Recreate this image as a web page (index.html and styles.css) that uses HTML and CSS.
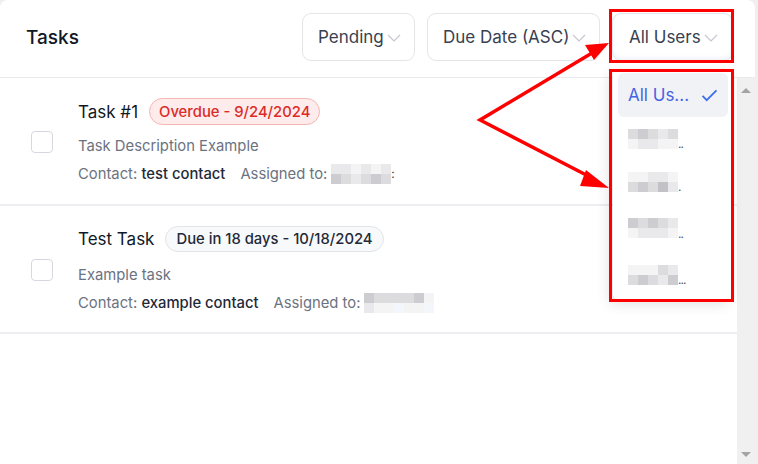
FILE: index.html
```html
<!DOCTYPE html>
<html>
<head>
<meta charset="utf-8">
<link rel="stylesheet" href="styles.css">
</head>
<body>
<div class="card">
  <header class="header">
    <h1 class="title">Tasks</h1>
    <div class="filters">
      <div class="select w-pending">Pending<svg class="chev" viewBox="0 0 14 8"><path d="M1 1l6 6 6-6"/></svg></div>
      <div class="select w-due">Due Date (ASC)<svg class="chev" viewBox="0 0 14 8"><path d="M1 1l6 6 6-6"/></svg></div>
      <div class="select-wrap">
        <div class="select active w-users">All Users<svg class="chev" viewBox="0 0 14 8"><path d="M1 1l6 6 6-6"/></svg></div>
        <div class="menu">
          <div class="menu-item selected"><span>All Us...</span><svg class="check" viewBox="0 0 18 14"><path d="M1.5 7.5l4.5 4.5L16.5 1.5"/></svg></div>
          <div class="menu-item"><span class="blur b5"><i class="g3"></i><i class="g4"></i><i class="g3"></i><i class="g2"></i><i class="g3"></i><i class="g1"></i><i class="g2"></i><i class="g2"></i><i class="g1"></i><i class="g1"></i></span><span class="dots">..</span></div>
          <div class="menu-item"><span class="blur b5"><i class="g1"></i><i class="g1"></i><i class="g2"></i><i class="g2"></i><i class="g1"></i><i class="g3"></i><i class="g4"></i><i class="g3"></i><i class="g5"></i><i class="g2"></i></span><span class="dots">.</span></div>
          <div class="menu-item tall"><span class="blur b5"><i class="g4"></i><i class="g3"></i><i class="g4"></i><i class="g3"></i><i class="g2"></i><i class="g1"></i><i class="g2"></i><i class="g2"></i><i class="g2"></i><i class="g1"></i></span><span class="dots">..</span></div>
          <div class="menu-item"><span class="blur b5"><i class="g1"></i><i class="g1"></i><i class="g1"></i><i class="g3"></i><i class="g2"></i><i class="g3"></i><i class="g4"></i><i class="g3"></i><i class="g2"></i><i class="g4"></i></span><span class="dots">...</span></div>
        </div>
      </div>
    </div>
  </header>
  <div class="body">
    <div class="list">
      <div class="task">
        <span class="checkbox"></span>
        <div class="info">
          <div class="head"><span class="name">Task #1</span><span class="badge overdue">Overdue - 9/24/2024</span></div>
          <div class="desc">Task Description Example</div>
          <div class="meta"><span>Contact: <b>test contact</b></span><span class="assigned">Assigned to: <span class="blur b6"><i class="g2"></i><i class="g2"></i><i class="g1"></i><i class="g2"></i><i class="g1"></i><i class="g2"></i><i class="g4"></i><i class="g3"></i><i class="g2"></i><i class="g3"></i><i class="g4"></i><i class="g3"></i></span><span class="colon">:</span></span></div>
        </div>
      </div>
      <div class="task">
        <span class="checkbox"></span>
        <div class="info">
          <div class="head"><span class="name">Test Task</span><span class="badge due">Due in 18 days - 10/18/2024</span></div>
          <div class="desc">Example task</div>
          <div class="meta"><span>Contact: <b>example contact</b></span><span class="assigned">Assigned to: <span class="blur b7"><i class="g4"></i><i class="g3"></i><i class="g3"></i><i class="g3"></i><i class="g3"></i><i class="g4"></i><i class="g1"></i><i class="g2"></i><i class="g1"></i><i class="g1"></i><i class="g0"></i><i class="g1"></i><i class="g1"></i><i class="g0"></i></span></span></div>
        </div>
      </div>
    </div>
    <div class="scrollbar"><span class="arrow up"></span><span class="arrow down"></span></div>
  </div>
</div>
<svg class="annot" width="758" height="464" viewBox="0 0 758 464">
  <rect x="610.5" y="10.5" width="122" height="51" fill="none" stroke="#ff0000" stroke-width="3"/>
  <rect x="610.5" y="70.5" width="122" height="230" fill="none" stroke="#ff0000" stroke-width="3"/>
  <polyline points="592,53 480,120 592,178" fill="none" stroke="#ff0000" stroke-width="3.5" stroke-linejoin="miter"/>
  <polygon points="609,43 585,45 594,60" fill="#ff0000"/>
  <polygon points="609,188 586,170 580,186" fill="#ff0000"/>
</svg>
</body>
</html>
```

FILE: styles.css
```css
* { box-sizing: border-box; }
html, body { margin: 0; padding: 0; }
body {
  width: 758px;
  height: 464px;
  overflow: hidden;
  background: #efefef;
  font-family: Inter, "Noto Sans", sans-serif;
  color: #111827;
  position: relative;
}
.card {
  width: 755px;
  height: 464px;
  background: #fff;
  border-radius: 8px 8px 0 0;
  display: flex;
  flex-direction: column;
}
.header {
  height: 78px;
  flex: none;
  display: flex;
  align-items: center;
  justify-content: space-between;
  padding: 0 22px 3px 26px;
  border-bottom: 1px solid #e9eaee;
}
.title {
  margin: 0;
  font-size: 19px;
  font-weight: 500;
  color: #111827;
}
.filters {
  display: flex;
  gap: 12px;
}
.select {
  height: 48px;
  display: flex;
  align-items: center;
  padding: 0 0 0 15px;
  border: 1px solid #e3e5e9;
  border-radius: 9px;
  font-size: 17px;
  color: #374151;
  background: #fff;
  white-space: nowrap;
}
.w-pending { width: 113px; }
.w-due { width: 173px; }
.w-users { width: 121px; }
.select.active {
  box-shadow: inset 0 -2px 4px rgba(120, 130, 230, 0.12);
  padding-left: 16px;
}
.chev {
  width: 14px;
  height: 8px;
  margin-left: 3px;
  margin-top: 2px;
  flex: none;
  fill: none;
  stroke: #c4c7ce;
  stroke-width: 1.2;
}
.select-wrap { position: relative; }
.menu {
  position: absolute;
  top: 57px;
  right: 0;
  width: 120px;
  height: 230px;
  background: #fff;
  border-radius: 6px;
  box-shadow: -4px 4px 14px rgba(0, 0, 0, 0.12);
  padding: 3px 5px;
  z-index: 2;
}
.menu-item {
  height: 43px;
  display: flex;
  align-items: center;
  padding: 0 10px;
  font-size: 17px;
}
.menu-item.tall { height: 50px; }
.menu-item.selected {
  height: 44px;
  background: #f1f2f6;
  border-radius: 6px;
  color: #4763e4;
  justify-content: space-between;
}
.check {
  width: 17px;
  height: 13px;
  fill: none;
  stroke: #3f6fe8;
  stroke-width: 2;
}
.blur {
  display: inline-grid;
  grid-auto-rows: 10px;
  vertical-align: middle;
}
.blur i { display: block; }
.blur.b5 { grid-template-columns: repeat(5, 10px); }
.blur.b6 { grid-template-columns: repeat(6, 10px); }
.blur.b7 { grid-template-columns: repeat(7, 10px); }
.g0 { background: #f3f6fa; }
.g1 { background: #f4f4f5; }
.g2 { background: #e9e9eb; }
.g3 { background: #dcdcdf; }
.g4 { background: #cdcdd1; }
.g5 { background: #c2c2c6; }
.dots {
  font-size: 12px;
  color: #555;
  align-self: center;
  margin-top: 10px;
  letter-spacing: -1px;
}
.body {
  flex: 1;
  display: flex;
  min-height: 0;
}
.list { flex: 1; }
.task {
  height: 128px;
  display: flex;
  align-items: center;
  padding-left: 31px;
  border-bottom: 2px solid #eceef1;
}
.checkbox {
  width: 22px;
  height: 22px;
  border: 1px solid #d5d8de;
  border-radius: 4px;
  flex: none;
  margin-right: 25px;
  margin-top: 2px;
}
.info { display: flex; flex-direction: column; }
.head {
  display: flex;
  align-items: center;
  gap: 11px;
  height: 27px;
}
.name {
  font-size: 17px;
  color: #111827;
}
.badge {
  height: 27px;
  display: inline-flex;
  align-items: center;
  padding: 0 9px;
  border-radius: 14px;
  font-size: 14.8px;
  font-weight: 500;
}
.badge.overdue {
  background: #fdeceb;
  border: 1px solid #f5b5b1;
  color: #dc2a27;
}
.badge.due {
  background: #f8f9fb;
  border: 1px solid #e2e4e9;
  color: #1f2937;
  height: 26px;
  padding: 0 10px;
}
.desc {
  margin-top: 11px;
  font-size: 14.8px;
  line-height: 20px;
  color: #6b7280;
}
.meta {
  margin-top: 8px;
  font-size: 14.8px;
  line-height: 20px;
  color: #6b7280;
  display: flex;
  align-items: center;
}
.meta b { font-weight: 500; color: #1f2937; }
.assigned { margin-left: 15px; display: inline-flex; align-items: center; }
.assigned .blur { margin-left: 4px; }
.colon { color: #333; font-size: 12px; }
.task:nth-child(2) .desc { margin-top: 12px; }
.task:nth-child(2) .meta { margin-top: 8px; }
.scrollbar {
  width: 18px;
  flex: none;
  background: #f0f0f0;
  position: relative;
}
.arrow {
  position: absolute;
  left: 4px;
  width: 0;
  height: 0;
  border-left: 5px solid transparent;
  border-right: 5px solid transparent;
}
.arrow.up { top: 10px; border-bottom: 5px solid #a3a3a3; }
.arrow.down { bottom: 7px; border-top: 5px solid #a3a3a3; }
.annot {
  position: absolute;
  left: 0;
  top: 0;
  pointer-events: none;
  z-index: 5;
}
```
